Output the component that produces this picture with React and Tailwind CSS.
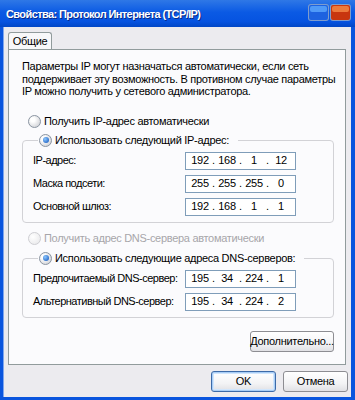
import { Fragment } from 'react';

const FONT = "font-['Liberation_Sans',Arial,sans-serif]";

function Radio({ checked, disabled }) {
  return (
    <span
      className={
        'relative flex h-[13px] w-[13px] shrink-0 items-center justify-center rounded-full border ' +
        (disabled
          ? 'border-[#cfcfd3] bg-[#ededef] bg-[radial-gradient(circle_at_35%_35%,#ffffff,#e6e6e8)]'
          : 'border-[#8c96a3] bg-[#dcdde0] bg-[radial-gradient(circle_at_35%_35%,#ffffff_20%,#c4c6cb)]')
      }
    >
      {checked && (
        <span className="h-[6px] w-[6px] rounded-full bg-[#2a6fd6] bg-[radial-gradient(circle_at_35%_35%,#8cc8ff,#0d4fb8)]" />
      )}
    </span>
  );
}

function RadioRow({ label, checked, disabled }) {
  return (
    <div className={'flex h-[13px] items-center gap-[3px] ' + (disabled ? 'text-[#a7a6aa]' : 'text-black')}>
      <Radio checked={checked} disabled={disabled} />
      <span className="whitespace-nowrap leading-[13px]">{label}</span>
    </div>
  );
}

function IpBox({ parts }) {
  return (
    <div className="flex h-[18px] w-[111px] items-center border border-[#7f9db9] bg-white px-[2px]">
      {parts.map((p, i) => (
        <Fragment key={i}>
          {i > 0 && <span className="w-[3px] text-center">.</span>}
          <span className="w-[24px] text-center">{p}</span>
        </Fragment>
      ))}
    </div>
  );
}

function FieldRow({ label, parts }) {
  return (
    <div className="flex h-[18px] items-center">
      <span className="w-[152px] whitespace-nowrap tracking-[-0.5px]">{label}</span>
      <IpBox parts={parts} />
    </div>
  );
}

function Group({ legend, rows }) {
  return (
    <fieldset className="rounded-[4px] border border-[#d2d2d6] pb-[6px] pl-[10px]">
      <legend className="ml-[5px] pl-[1px] pr-[9px]">
        <RadioRow label={legend} checked />
      </legend>
      <div className="mt-[5px] flex flex-col gap-[5px]">
        {rows.map(r => (
          <FieldRow key={r.label} label={r.label} parts={r.parts} />
        ))}
      </div>
    </fieldset>
  );
}

function Button({ children, className = '', primary }) {
  return (
    <button
      className={
        'flex h-[21px] items-center justify-center rounded-[3px] border bg-[#f1f1f3] bg-[linear-gradient(#ffffff,#f3f3f5_60%,#e0e0e4)] ' +
        (primary
          ? 'border-[#3c6aa8] shadow-[inset_0_0_0_1px_#a8cdf6,inset_0_0_0_2px_#d2e6fc] '
          : 'border-[#8d8d92] ') +
        className
      }
    >
      {children}
    </button>
  );
}

function CaptionButton({ fill, light }) {
  return (
    <svg width="21" height="17" viewBox="0 0 21 17">
      <rect x="0" y="0" width="21" height="17" rx="3" fill="#7e9ccc" />
      <rect x="1" y="1" width="19" height="15" rx="2" fill={fill} />
      <rect x="2" y="2" width="17" height="6" rx="2" fill={light} />
    </svg>
  );
}

export default function App() {
  return (
    <div className={'flex h-[400px] w-[355px] flex-col bg-[#0a55de] text-[11px] tracking-[-0.3px] text-black ' + FONT}>
      {/* title bar */}
      <div className="flex h-[27px] shrink-0 items-center bg-[#0856e2] bg-[linear-gradient(#2f78e6,#0b5ae4_45%,#0653e0_80%,#0146c6)] pl-[6px] pr-[4px]">
        <span className="flex-1 whitespace-nowrap pt-[1px] text-[11px] font-bold tracking-[-0.6px] text-white [text-shadow:1px_1px_#0a2a86]">
          Свойства: Протокол Интернета (TCP/IP)
        </span>
        <div className="mb-[3px] flex gap-[1px]">
          <CaptionButton fill="#1d62e0" light="#4f9af8" />
          <CaptionButton fill="#c8360f" light="#ec7a3c" />
        </div>
      </div>

      {/* body */}
      <div className="mb-[3px] ml-[3px] mr-[4px] flex flex-1 flex-col border-l border-[#7fa6ee] bg-[#ecebef] pl-[4px] pr-[3px] pt-[5px]">
        <div className="flex">
          <div className="flex h-[17px] w-[44px] items-center justify-center rounded-t-[3px] border border-b-0 border-[#919b9c] bg-[#f8f8fa]">
            Общие
          </div>
        </div>
        <div className="mr-[2px] flex h-[316px] flex-col border border-[#919b9c] bg-[#fbfbfd] pl-[13px] pr-[11px] pt-[10px]">
          <p className="whitespace-nowrap leading-[12.5px]">
            Параметры IP могут назначаться автоматически, если сеть
            <br />
            поддерживает эту возможность. В противном случае параметры
            <br />
            IP можно получить у сетевого администратора.
          </p>
          <div className="ml-[6px] mt-[17px]">
            <RadioRow label="Получить IP-адрес автоматически" />
          </div>
          <div className="mt-[6px]">
            <Group
              legend="Использовать следующий IP-адрес:"
              rows={[
                { label: 'IP-адрес:', parts: ['192', '168', '1', '12'] },
                { label: 'Маска подсети:', parts: ['255', '255', '255', '0'] },
                { label: 'Основной шлюз:', parts: ['192', '168', '1', '1'] },
              ]}
            />
          </div>
          <div className="ml-[6px] mt-[9px]">
            <RadioRow label="Получить адрес DNS-сервера автоматически" disabled />
          </div>
          <div className="mt-[7px]">
            <Group
              legend="Использовать следующие адреса DNS-серверов:"
              rows={[
                { label: 'Предпочитаемый DNS-сервер:', parts: ['195', '34', '224', '1'] },
                { label: 'Альтернативный DNS-сервер:', parts: ['195', '34', '224', '2'] },
              ]}
            />
          </div>
          <div className="mt-[13px] flex justify-end">
            <Button className="w-[84px]">Дополнительно...</Button>
          </div>
        </div>
        <div className="mt-[6px] flex justify-end gap-[7px]">
          <Button primary className="w-[65px]">OK</Button>
          <Button className="w-[65px]">Отмена</Button>
        </div>
      </div>
    </div>
  );
}
